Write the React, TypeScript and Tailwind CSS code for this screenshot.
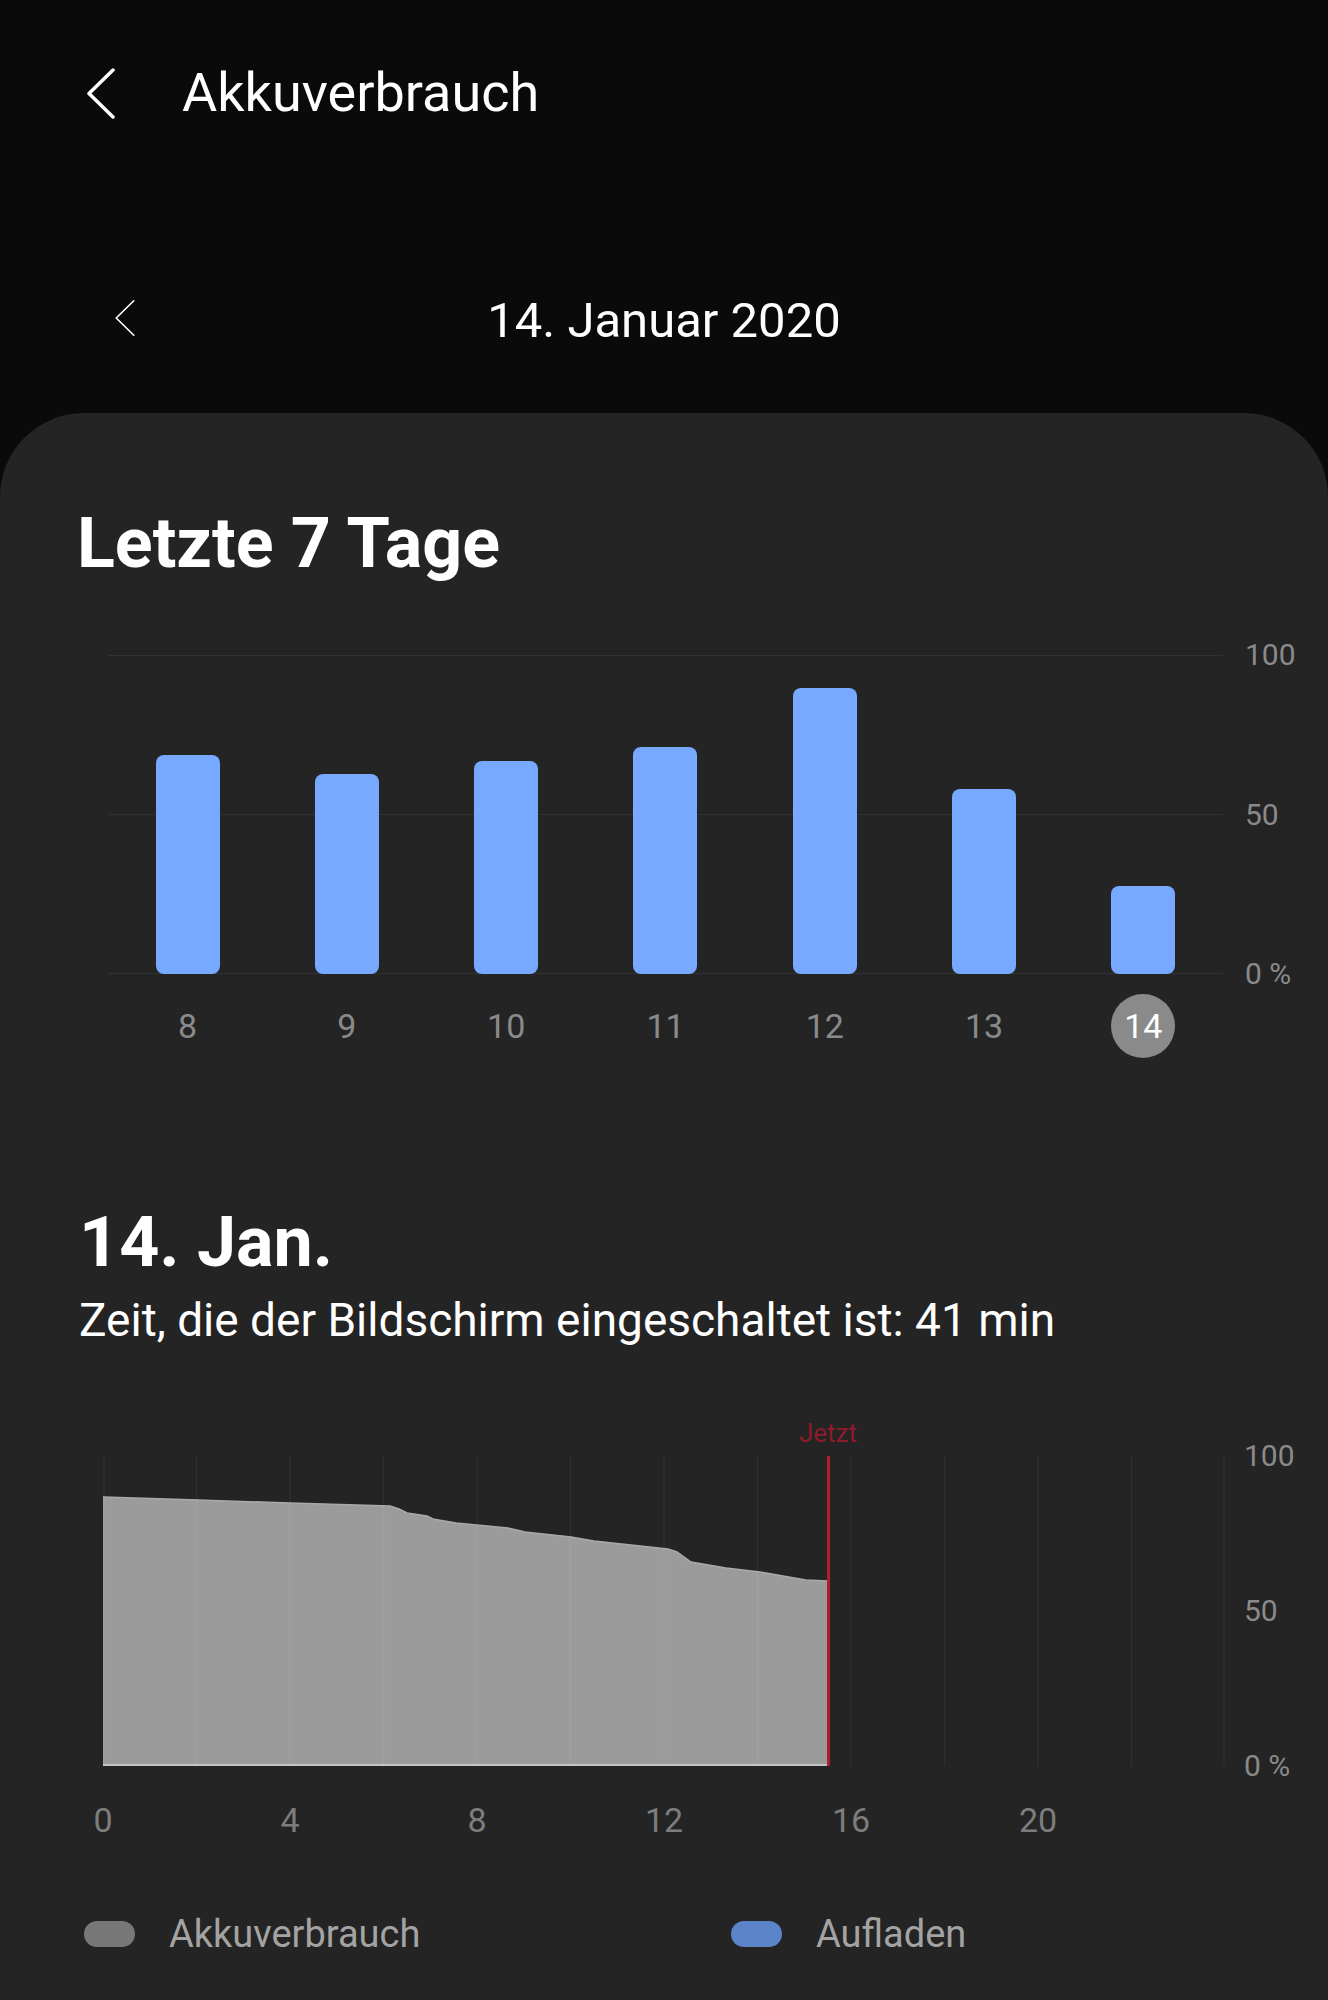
import React from 'react';

const weekBars = [
  { day: '8', height: 219 },
  { day: '9', height: 200 },
  { day: '10', height: 213 },
  { day: '11', height: 227 },
  { day: '12', height: 286 },
  { day: '13', height: 185 },
  { day: '14', height: 88, active: true },
];

// battery curve for today, in chart pixels (1122 x 310)
const usagePoints = [
  [0, 41], [95, 44], [187, 47], [287, 50], [296, 53], [304, 57], [324, 60],
  [330, 63], [353, 67], [405, 72], [422, 76], [468, 81], [491, 85], [565, 93],
  [574, 96], [588, 106], [623, 112], [657, 116], [680, 120], [703, 124], [725, 125],
];

const hourLabels = ['0', '4', '8', '12', '16', '20'];

const ChevronLeft: React.FC<{ className?: string; stroke?: number }> = ({ className, stroke = 3.5 }) => (
  <svg viewBox="0 0 30 51" className={className} fill="none">
    <polyline
      points="27,2 3,25.5 27,49"
      stroke="white"
      strokeWidth={stroke}
      strokeLinecap="round"
      strokeLinejoin="round"
    />
  </svg>
);

const App: React.FC = () => {
  const areaPath =
    'M0,310 ' + usagePoints.map(([x, y]) => `L${x},${y}`).join(' ') + ' L725,310 Z';
  const topLine = 'M' + usagePoints.map(([x, y]) => `${x},${y}`).join(' L');

  return (
    <div className="w-[1328px] min-h-[2000px] flex flex-col bg-[#0a0a0a] text-white font-['Roboto',sans-serif]">
      {/* Header */}
      <div className="flex items-center pl-[86px] pt-[66px]">
        <ChevronLeft className="w-[30px] h-[51px]" />
        <h1 className="ml-[66px] text-[54px] leading-none font-normal">Akkuverbrauch</h1>
      </div>

      {/* Date switcher */}
      <div className="mt-[175px] grid grid-cols-[1fr_auto_1fr] items-center h-[50px]">
        <div className="pl-[114px]">
          <ChevronLeft className="w-[22px] h-[40px] -mt-[4px]" stroke={2.2} />
        </div>
        <div className="text-[49px] leading-none">14. Januar 2020</div>
        <div />
      </div>

      {/* Card */}
      <div className="mt-[68px] flex-1 bg-[#242424] rounded-t-[84px] pt-[95px] pb-[40px]">
        <h2 className="pl-[77px] text-[70px] leading-none font-bold">Letzte 7 Tage</h2>

        {/* Weekly bar chart */}
        <div className="mt-[77px] flex">
          <div className="ml-[108px] w-[1115px]">
            <div className="relative h-[319px]">
              <div className="absolute left-0 right-0 top-0 h-px bg-[#323232]" />
              <div className="absolute left-0 right-0 top-[159px] h-px bg-[#323232]" />
              <div className="absolute left-0 right-0 bottom-0 h-px bg-[#323232]" />
              <div className="relative grid grid-cols-7 items-end h-full">
                {weekBars.map((bar) => (
                  <div key={bar.day} className="flex justify-center">
                    <div
                      className="w-[64px] rounded-[8px] bg-[#76a9ff]"
                      style={{ height: bar.height }}
                    />
                  </div>
                ))}
              </div>
            </div>
            <div className="mt-[20px] grid grid-cols-7">
              {weekBars.map((bar) => (
                <div key={bar.day} className="flex justify-center">
                  <div
                    className={
                      bar.active
                        ? 'w-[64px] h-[64px] rounded-full bg-[#8a8a8a] text-white flex items-center justify-center text-[34px] leading-none'
                        : 'w-[64px] h-[64px] text-[#8a8a8a] flex items-center justify-center text-[34px] leading-none'
                    }
                  >
                    {bar.day}
                  </div>
                </div>
              ))}
            </div>
          </div>
          <div className="ml-[22px] relative w-[70px] h-[319px] text-[30px] leading-none text-[#8a8a8a]">
            <span className="absolute left-0 top-0 -translate-y-1/2">100</span>
            <span className="absolute left-0 top-1/2 -translate-y-1/2">50</span>
            <span className="absolute left-0 top-full -translate-y-1/2 whitespace-nowrap">0 %</span>
          </div>
        </div>

        {/* Day summary */}
        <h2 className="mt-[149px] pl-[79px] text-[70px] leading-none font-bold">14. Jan.</h2>
        <p className="mt-[20px] pl-[79px] text-[46px] leading-none">
          Zeit, die der Bildschirm eingeschaltet ist: 41 min
        </p>

        {/* Daily battery chart */}
        <div className="mt-[113px] flex">
          <div className="ml-[103px] w-[1122px]">
            <div className="relative h-[310px]">
              <span className="absolute bottom-full left-[725px] -translate-x-1/2 mb-[10px] text-[26px] leading-none text-[#8e1b29]">
                Jetzt
              </span>
              <svg viewBox="0 0 1122 310" className="w-[1122px] h-[310px] block">
                <path d={areaPath} fill="#9b9b9b" />
                <path d={topLine} fill="none" stroke="#a9a9a9" strokeWidth="1.5" />
                <line x1="0" y1="309" x2="725" y2="309" stroke="#c4c4c4" strokeWidth="2" />
                {Array.from({ length: 13 }).map((_, i) => (
                  <line
                    key={i}
                    x1={Math.min(1121, Math.max(1, i * 93.5))}
                    y1="0"
                    x2={Math.min(1121, Math.max(1, i * 93.5))}
                    y2="310"
                    stroke="white"
                    strokeOpacity="0.05"
                    strokeWidth="1.5"
                  />
                ))}
                <line x1="725.5" y1="0" x2="725.5" y2="310" stroke="#b01e2e" strokeWidth="3" />
              </svg>
            </div>
            <div className="mt-[37px] grid grid-cols-6 text-[34px] leading-none text-[#7d7d7d]">
              {hourLabels.map((h) => (
                <div key={h}>
                  <span className="inline-block -translate-x-1/2">{h}</span>
                </div>
              ))}
            </div>
          </div>
          <div className="ml-[19px] relative w-[70px] h-[310px] text-[30px] leading-none text-[#8a8a8a]">
            <span className="absolute left-0 top-0 -translate-y-1/2">100</span>
            <span className="absolute left-0 top-1/2 -translate-y-1/2">50</span>
            <span className="absolute left-0 top-full -translate-y-1/2 whitespace-nowrap">0 %</span>
          </div>
        </div>

        {/* Legend */}
        <div className="mt-[78px] pl-[84px] flex items-center text-[38px] leading-none text-[#a3a3a3]">
          <div className="w-[647px] flex items-center">
            <span className="w-[51px] h-[26px] rounded-[13px] bg-[#787878]" />
            <span className="ml-[34px]">Akkuverbrauch</span>
          </div>
          <div className="flex items-center">
            <span className="w-[51px] h-[26px] rounded-[13px] bg-[#5b85c8]" />
            <span className="ml-[34px]">Aufladen</span>
          </div>
        </div>
      </div>
    </div>
  );
};

export default App;
